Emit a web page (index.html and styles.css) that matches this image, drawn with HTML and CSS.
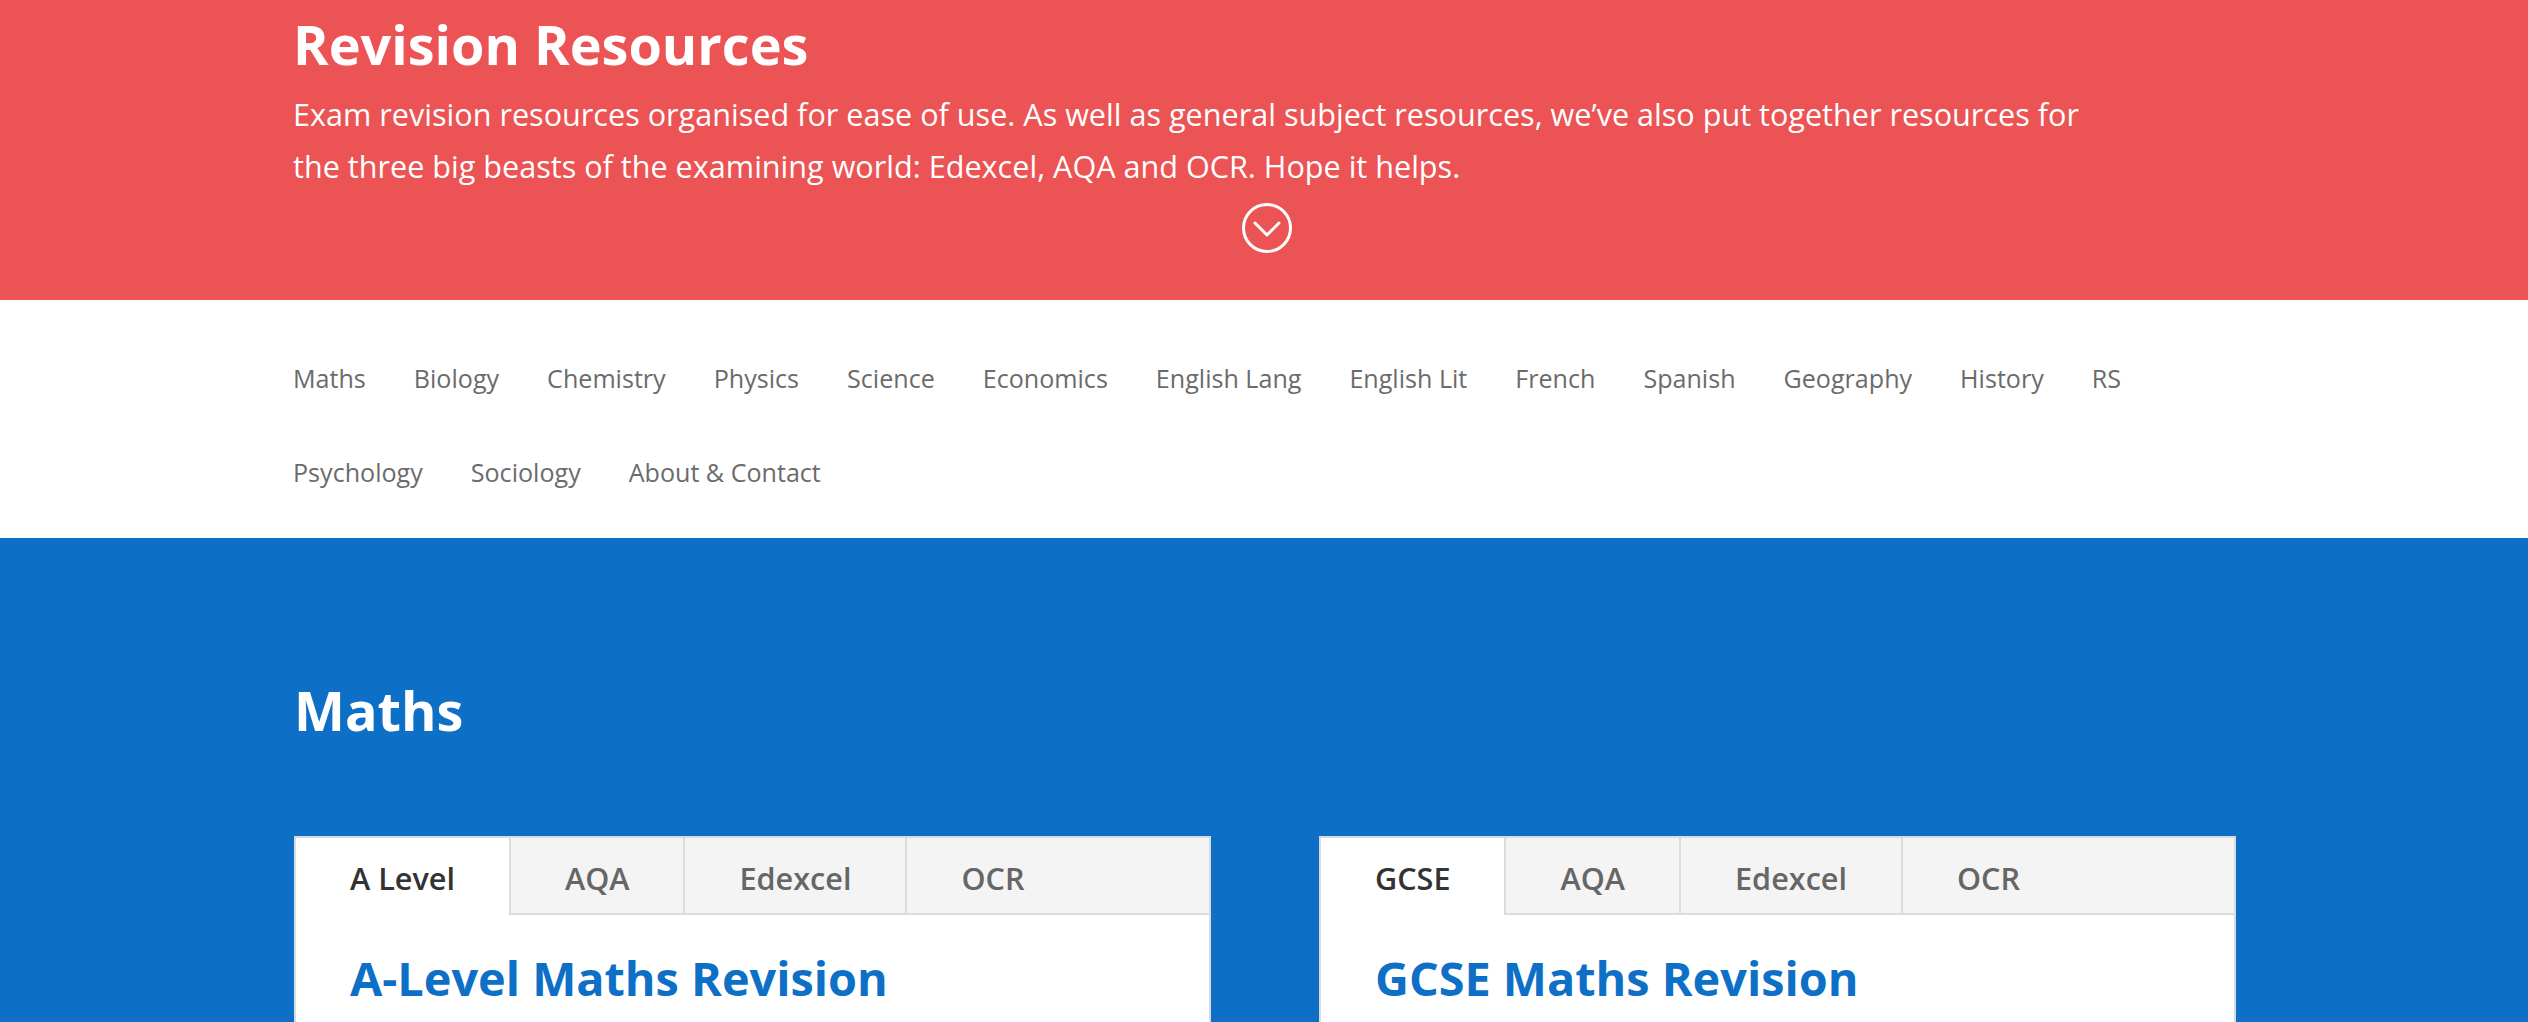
FILE: index.html
```html
<!DOCTYPE html>
<html lang="en">
<head>
    <meta charset="UTF-8">
    <title>Revision Resources</title>
    <link rel="stylesheet" href="styles.css">
</head>
<body>
    <header class="hero">
        <div class="wrap">
            <h1>Revision Resources</h1>
            <p>Exam revision resources organised for ease of use. As well as general subject resources, we’ve also put together resources for the three big beasts of the examining world: Edexcel, AQA and OCR. Hope it helps.</p>
        </div>
        <a class="scroll-down" href="#maths">
            <svg width="50" height="50" viewBox="0 0 50 50" fill="none" stroke="#fff">
                <circle cx="25" cy="25" r="23.5" stroke-width="3"/>
                <path d="M13 20 L25 32 L37 20" stroke-width="3" stroke-linecap="round" stroke-linejoin="round"/>
            </svg>
        </a>
    </header>
    <nav class="subject-nav">
        <ul>
            <li><a href="#">Maths</a></li>
            <li><a href="#">Biology</a></li>
            <li><a href="#">Chemistry</a></li>
            <li><a href="#">Physics</a></li>
            <li><a href="#">Science</a></li>
            <li><a href="#">Economics</a></li>
            <li><a href="#">English Lang</a></li>
            <li><a href="#">English Lit</a></li>
            <li><a href="#">French</a></li>
            <li><a href="#">Spanish</a></li>
            <li><a href="#">Geography</a></li>
            <li><a href="#">History</a></li>
            <li><a href="#">RS</a></li>
            <li><a href="#">Psychology</a></li>
            <li><a href="#">Sociology</a></li>
            <li><a href="#">About &amp; Contact</a></li>
        </ul>
    </nav>
    <main class="subject" id="maths">
        <h2>Maths</h2>
        <div class="cards">
            <section class="card">
                <div class="tabs">
                    <a class="tab active" href="#">A Level</a>
                    <a class="tab" href="#">AQA</a>
                    <a class="tab" href="#">Edexcel</a>
                    <a class="tab last" href="#">OCR</a>
                </div>
                <div class="card-body">
                    <h3>A-Level Maths Revision</h3>
                </div>
            </section>
            <section class="card">
                <div class="tabs">
                    <a class="tab active" href="#">GCSE</a>
                    <a class="tab" href="#">AQA</a>
                    <a class="tab" href="#">Edexcel</a>
                    <a class="tab last" href="#">OCR</a>
                </div>
                <div class="card-body">
                    <h3>GCSE Maths Revision</h3>
                </div>
            </section>
        </div>
    </main>
</body>
</html>
```

FILE: styles.css
```css
html, body {
    height: 1022px;
    overflow: hidden;
}

body {
    font-family: "Open Sans", sans-serif;
    margin: 0;
    padding: 0;
    background-color: #0d70c6;
}

a {
    text-decoration: none;
}

.hero {
    height: 300px;
    box-sizing: border-box;
    background-color: #ec5354;
    color: white;
    padding-top: 9px;
}

.wrap {
    width: 1800px;
    margin-left: 293px;
}

.hero h1 {
    margin: 0;
    font-size: 54px;
    line-height: 70px;
    font-weight: 700;
}

.hero p {
    margin: 9px 0 0;
    font-size: 30.6px;
    line-height: 52px;
    font-weight: 400;
}

.scroll-down {
    display: block;
    width: 50px;
    height: 50px;
    margin: 11px auto 0;
    transform: translateX(3px);
}

.subject-nav {
    height: 238px;
    box-sizing: border-box;
    background-color: white;
    padding: 31px 0 0 293px;
}

.subject-nav ul {
    display: flex;
    flex-wrap: wrap;
    width: 1900px;
    margin: 0;
    padding: 0;
    list-style: none;
    column-gap: 48px;
}

.subject-nav a {
    display: block;
    font-size: 25.1px;
    line-height: 94px;
    color: #6b6b6b;
}

.subject {
    padding: 0 292px 0 294px;
}

.subject h2 {
    margin: 0;
    padding-top: 134px;
    font-size: 54px;
    line-height: 76px;
    font-weight: 700;
    color: white;
}

.cards {
    display: flex;
    justify-content: space-between;
    margin-top: 88px;
}

.card {
    width: 917px;
    box-sizing: border-box;
    height: 400px;
    background-color: white;
    border: 2px solid #d9dcdf;
    border-bottom: 0;
}

.tabs {
    display: flex;
    height: 77px;
    box-sizing: border-box;
    background-color: #f4f4f4;
    border-bottom: 2px solid #dcdcdc;
}

.tab {
    box-sizing: border-box;
    height: 77px;
    padding: 0 54px;
    font-size: 30.6px;
    font-weight: 600;
    line-height: 80px;
    color: #666;
    border-right: 2px solid #dcdcdc;
}

.tab.active {
    background-color: white;
    color: #333;
}

.tab.last {
    border-right: 0;
}

.card-body {
    padding: 32px 54px;
}

.card-body h3 {
    margin: 0;
    font-size: 46.8px;
    line-height: 62px;
    font-weight: 700;
    color: #0d70c6;
}
```
